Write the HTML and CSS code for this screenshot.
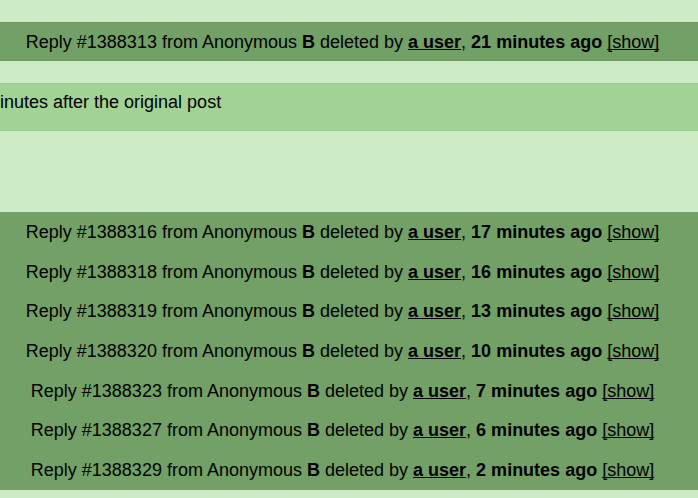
FILE: index.html
```html
<!DOCTYPE html>
<html>
<head>
<meta charset="utf-8">
<link rel="stylesheet" href="styles.css">
</head>
<body>
<div class="page">
  <div class="gap-top"></div>
  <div class="band single">
    <div class="row">Reply #1388313 from Anonymous <b>B</b> deleted by <a class="user" href="#">a user</a>, <b>21 minutes ago</b> <a class="show" href="#">[show]</a></div>
  </div>
  <div class="gap-small"></div>
  <div class="note">inutes after the original post</div>
  <div class="gap-large"></div>
  <div class="band multi">
    <div class="row">Reply #1388316 from Anonymous <b>B</b> deleted by <a class="user" href="#">a user</a>, <b>17 minutes ago</b> <a class="show" href="#">[show]</a></div>
    <div class="row">Reply #1388318 from Anonymous <b>B</b> deleted by <a class="user" href="#">a user</a>, <b>16 minutes ago</b> <a class="show" href="#">[show]</a></div>
    <div class="row">Reply #1388319 from Anonymous <b>B</b> deleted by <a class="user" href="#">a user</a>, <b>13 minutes ago</b> <a class="show" href="#">[show]</a></div>
    <div class="row">Reply #1388320 from Anonymous <b>B</b> deleted by <a class="user" href="#">a user</a>, <b>10 minutes ago</b> <a class="show" href="#">[show]</a></div>
    <div class="row">Reply #1388323 from Anonymous <b>B</b> deleted by <a class="user" href="#">a user</a>, <b>7 minutes ago</b> <a class="show" href="#">[show]</a></div>
    <div class="row">Reply #1388327 from Anonymous <b>B</b> deleted by <a class="user" href="#">a user</a>, <b>6 minutes ago</b> <a class="show" href="#">[show]</a></div>
    <div class="row">Reply #1388329 from Anonymous <b>B</b> deleted by <a class="user" href="#">a user</a>, <b>2 minutes ago</b> <a class="show" href="#">[show]</a></div>
  </div>
</div>
</body>
</html>
```

FILE: styles.css
```css
html, body {
  margin: 0;
  padding: 0;
  background: #cdebc5;
  overflow: hidden;
}
body {
  width: 698px;
  height: 498px;
  font-family: "Liberation Sans", Arial, sans-serif;
  font-size: 18px;
  color: #000;
}
.page {
  display: flex;
  flex-direction: column;
}
.gap-top { height: 22px; }
.gap-small { height: 22px; }
.gap-large { height: 81px; }
.band {
  background: #72a066;
  padding-right: 13px;
}
.band.single {
  border-top: 1px solid #6a975e;
  border-bottom: 1px solid #6a975e;
}
.row {
  text-align: center;
  height: 37.7px;
  line-height: 37.7px;
  padding-top: 2px;
  white-space: nowrap;
}
.band.single .row {
  height: 36px;
  line-height: 36px;
  padding-top: 1px;
}
.note {
  background: #a2d296;
  border-top: 1px solid #9ccd90;
  border-bottom: 1px solid #9ccd90;
  height: 46px;
  line-height: 37px;
  white-space: nowrap;
}
a {
  color: #000;
  text-decoration: underline;
  text-decoration-skip-ink: none;
}
a.user {
  font-weight: bold;
}
```
